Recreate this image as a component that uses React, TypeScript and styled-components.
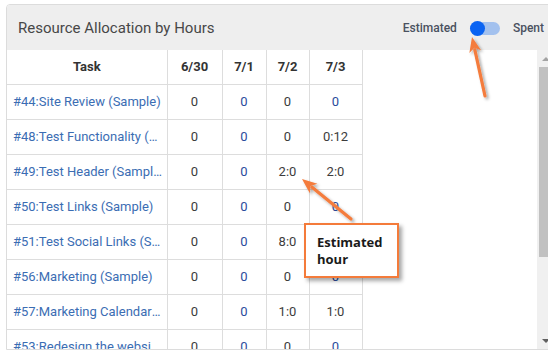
import React from "react";
import styled, { createGlobalStyle } from "styled-components";

const GlobalStyle = createGlobalStyle`
  html, body {
    margin: 0;
    padding: 0;
    background: #fff;
    overflow: hidden;
  }
  body {
    font-family: Roboto, "Liberation Sans", Arial, sans-serif;
  }
`;

const Page = styled.div`
  position: relative;
  width: 548px;
  height: 356px;
  padding: 4px 0 0 6px;
  box-sizing: border-box;
`;

const Panel = styled.div`
  width: 547px;
  border: 1px solid #dcdcdc;
  border-radius: 4px 4px 0 0;
  background: #fff;
  overflow: hidden;
`;

const Header = styled.div`
  height: 45px;
  background: #eeeeee;
  display: flex;
  align-items: center;
  justify-content: space-between;
  padding: 0 10px 0 11px;
`;

const Title = styled.h2`
  margin: 0;
  font-size: 15px;
  font-weight: 400;
  color: #474747;
  padding-top: 1px;
`;

const ToggleGroup = styled.div`
  display: flex;
  align-items: center;
  gap: 13px;
  font-size: 12px;
  font-weight: 500;
  color: #4a5160;
  padding-top: 1px;
`;

const Track = styled.div`
  width: 30px;
  height: 13px;
  border-radius: 7px;
  background: #a3c1ee;
  display: flex;
  align-items: center;
`;

const Knob = styled.div`
  width: 15px;
  height: 15px;
  border-radius: 50%;
  background: #0a63f2;
`;

const Body = styled.div`
  display: flex;
  height: 299px;
`;

const TableWrap = styled.div`
  flex: 1;
  overflow: hidden;
`;

const Table = styled.table`
  width: 355px;
  border-collapse: collapse;
  table-layout: fixed;
  font-size: 13px;
  color: #3a3a3a;
`;

const Th = styled.th<{ $w: number }>`
  width: ${(p) => p.$w}px;
  height: 34px;
  padding: 0;
  font-weight: 700;
  color: #333;
  text-align: center;
  border-right: 1px solid #dddddd;
  border-bottom: 1px solid #dddddd;
  box-sizing: border-box;
`;

const Td = styled.td<{ $tone?: "blue" | "dark" }>`
  height: 35px;
  padding: 0;
  text-align: center;
  color: ${(p) => (p.$tone === "blue" ? "#2b4c9c" : "#3c3c3c")};
  border-right: 1px solid #dddddd;
  border-bottom: 1px solid #dddddd;
  box-sizing: border-box;
`;

const TaskCell = styled.td`
  height: 35px;
  padding: 0 3px 0 6px;
  text-align: left;
  border-right: 1px solid #dddddd;
  border-bottom: 1px solid #dddddd;
  white-space: nowrap;
  overflow: hidden;
  text-overflow: ellipsis;
  box-sizing: border-box;
  color: #3b6db3;
`;

const TaskLink = styled.a`
  color: #3b6db3;
  text-decoration: none;
`;

const ScrollBar = styled.div`
  width: 17px;
  background: #f0f0f0;
  display: flex;
  flex-direction: column;
  align-items: center;
`;

const ScrollArrow = styled.div<{ $down?: boolean }>`
  height: 17px;
  width: 100%;
  display: flex;
  align-items: center;
  justify-content: center;
  &::before {
    content: "";
    border-left: 4px solid transparent;
    border-right: 4px solid transparent;
    ${(p) =>
      p.$down
        ? "border-top: 4px solid #606060;"
        : "border-bottom: 4px solid #a3a3a3;"}
  }
`;

const Thumb = styled.div`
  width: 13px;
  height: 190px;
  background: #c1c1c1;
`;

const Spacer = styled.div`
  flex: 1;
`;

const Callout = styled.div`
  position: absolute;
  left: 304px;
  top: 223px;
  width: 95px;
  height: 55px;
  box-sizing: border-box;
  border: 2.5px solid #f47b3a;
  background: #fff;
  box-shadow: 3px 3px 4px rgba(0, 0, 0, 0.35);
  padding: 9px 0 0 11px;
  font-family: "Open Sans", "Noto Sans", sans-serif;
  font-weight: 700;
  font-size: 13px;
  line-height: 17px;
  color: #1a1a1a;
`;

const Overlay = styled.svg`
  position: absolute;
  left: 0;
  top: 0;
  pointer-events: none;
`;

type Row = {
  task: string;
  cells: [string, string, string, string];
};

const rows: Row[] = [
  { task: "#44:Site Review (Sample)", cells: ["0", "0", "0", "0"] },
  { task: "#48:Test Functionality (Sample)", cells: ["0", "0", "0", "0:12"] },
  { task: "#49:Test Header (Sample)", cells: ["0", "0", "2:0", "2:0"] },
  { task: "#50:Test Links (Sample)", cells: ["0", "0", "0", "0"] },
  { task: "#51:Test Social Links (Sample)", cells: ["0", "0", "8:0", "0"] },
  { task: "#56:Marketing (Sample)", cells: ["0", "0", "0", "0"] },
  { task: "#57:Marketing Calendar (Sample)", cells: ["0", "0", "1:0", "1:0"] },
  { task: "#53:Redesign the website (Sample)", cells: ["0", "0", "0", "0"] },
];

const columns = [
  { label: "6/30", w: 55 },
  { label: "7/1", w: 44 },
  { label: "7/2", w: 43 },
  { label: "7/3", w: 53 },
];

const toneFor = (col: number, v: string): "blue" | "dark" =>
  (col === 1 || col === 3) && v === "0" ? "blue" : "dark";

function Arrow({ x1, y1, x2, y2 }: { x1: number; y1: number; x2: number; y2: number }) {
  // tail (x1,y1) -> tip (x2,y2)
  const dx = x2 - x1;
  const dy = y2 - y1;
  const len = Math.hypot(dx, dy);
  const ux = dx / len;
  const uy = dy / len;
  const head = 15;
  const half = 6;
  const bx = x2 - ux * head;
  const by = y2 - uy * head;
  const px = -uy * half;
  const py = ux * half;
  return (
    <g filter="url(#shadow)">
      <line x1={x1} y1={y1} x2={bx + ux * 2} y2={by + uy * 2} stroke="#f47c3c" strokeWidth={3.2} strokeLinecap="round" />
      <polygon points={`${x2},${y2} ${bx + px},${by + py} ${bx + ux * 4},${by + uy * 4} ${bx - px},${by - py}`} fill="#f47c3c" />
    </g>
  );
}

export default function App() {
  return (
    <Page>
      <GlobalStyle />
      <Panel>
        <Header>
          <Title>Resource Allocation by Hours</Title>
          <ToggleGroup>
            <span>Estimated</span>
            <Track>
              <Knob />
            </Track>
            <span>Spent</span>
          </ToggleGroup>
        </Header>
        <Body>
          <TableWrap>
            <Table>
              <thead>
                <tr>
                  <Th $w={160}>Task</Th>
                  {columns.map((c) => (
                    <Th key={c.label} $w={c.w}>
                      {c.label}
                    </Th>
                  ))}
                </tr>
              </thead>
              <tbody>
                {rows.map((r) => (
                  <tr key={r.task}>
                    <TaskCell>
                      <TaskLink href="#">{r.task}</TaskLink>
                    </TaskCell>
                    {r.cells.map((v, i) => (
                      <Td key={i} $tone={toneFor(i, v)}>
                        {v}
                      </Td>
                    ))}
                  </tr>
                ))}
              </tbody>
            </Table>
          </TableWrap>
          <ScrollBar>
            <ScrollArrow />
            <Thumb />
            <Spacer />
            <ScrollArrow $down />
          </ScrollBar>
        </Body>
      </Panel>

      <Overlay width={548} height={356}>
        <defs>
          <filter id="shadow" x="-50%" y="-50%" width="200%" height="200%">
            <feDropShadow dx="2" dy="2" stdDeviation="1.5" floodColor="#000" floodOpacity="0.35" />
          </filter>
        </defs>
        <Arrow x1={351} y1={219} x2={302} y2={179} />
        <Arrow x1={485} y1={96} x2={472} y2={37} />
      </Overlay>
      <Callout>
        Estimated
        <br />
        hour
      </Callout>
    </Page>
  );
}
